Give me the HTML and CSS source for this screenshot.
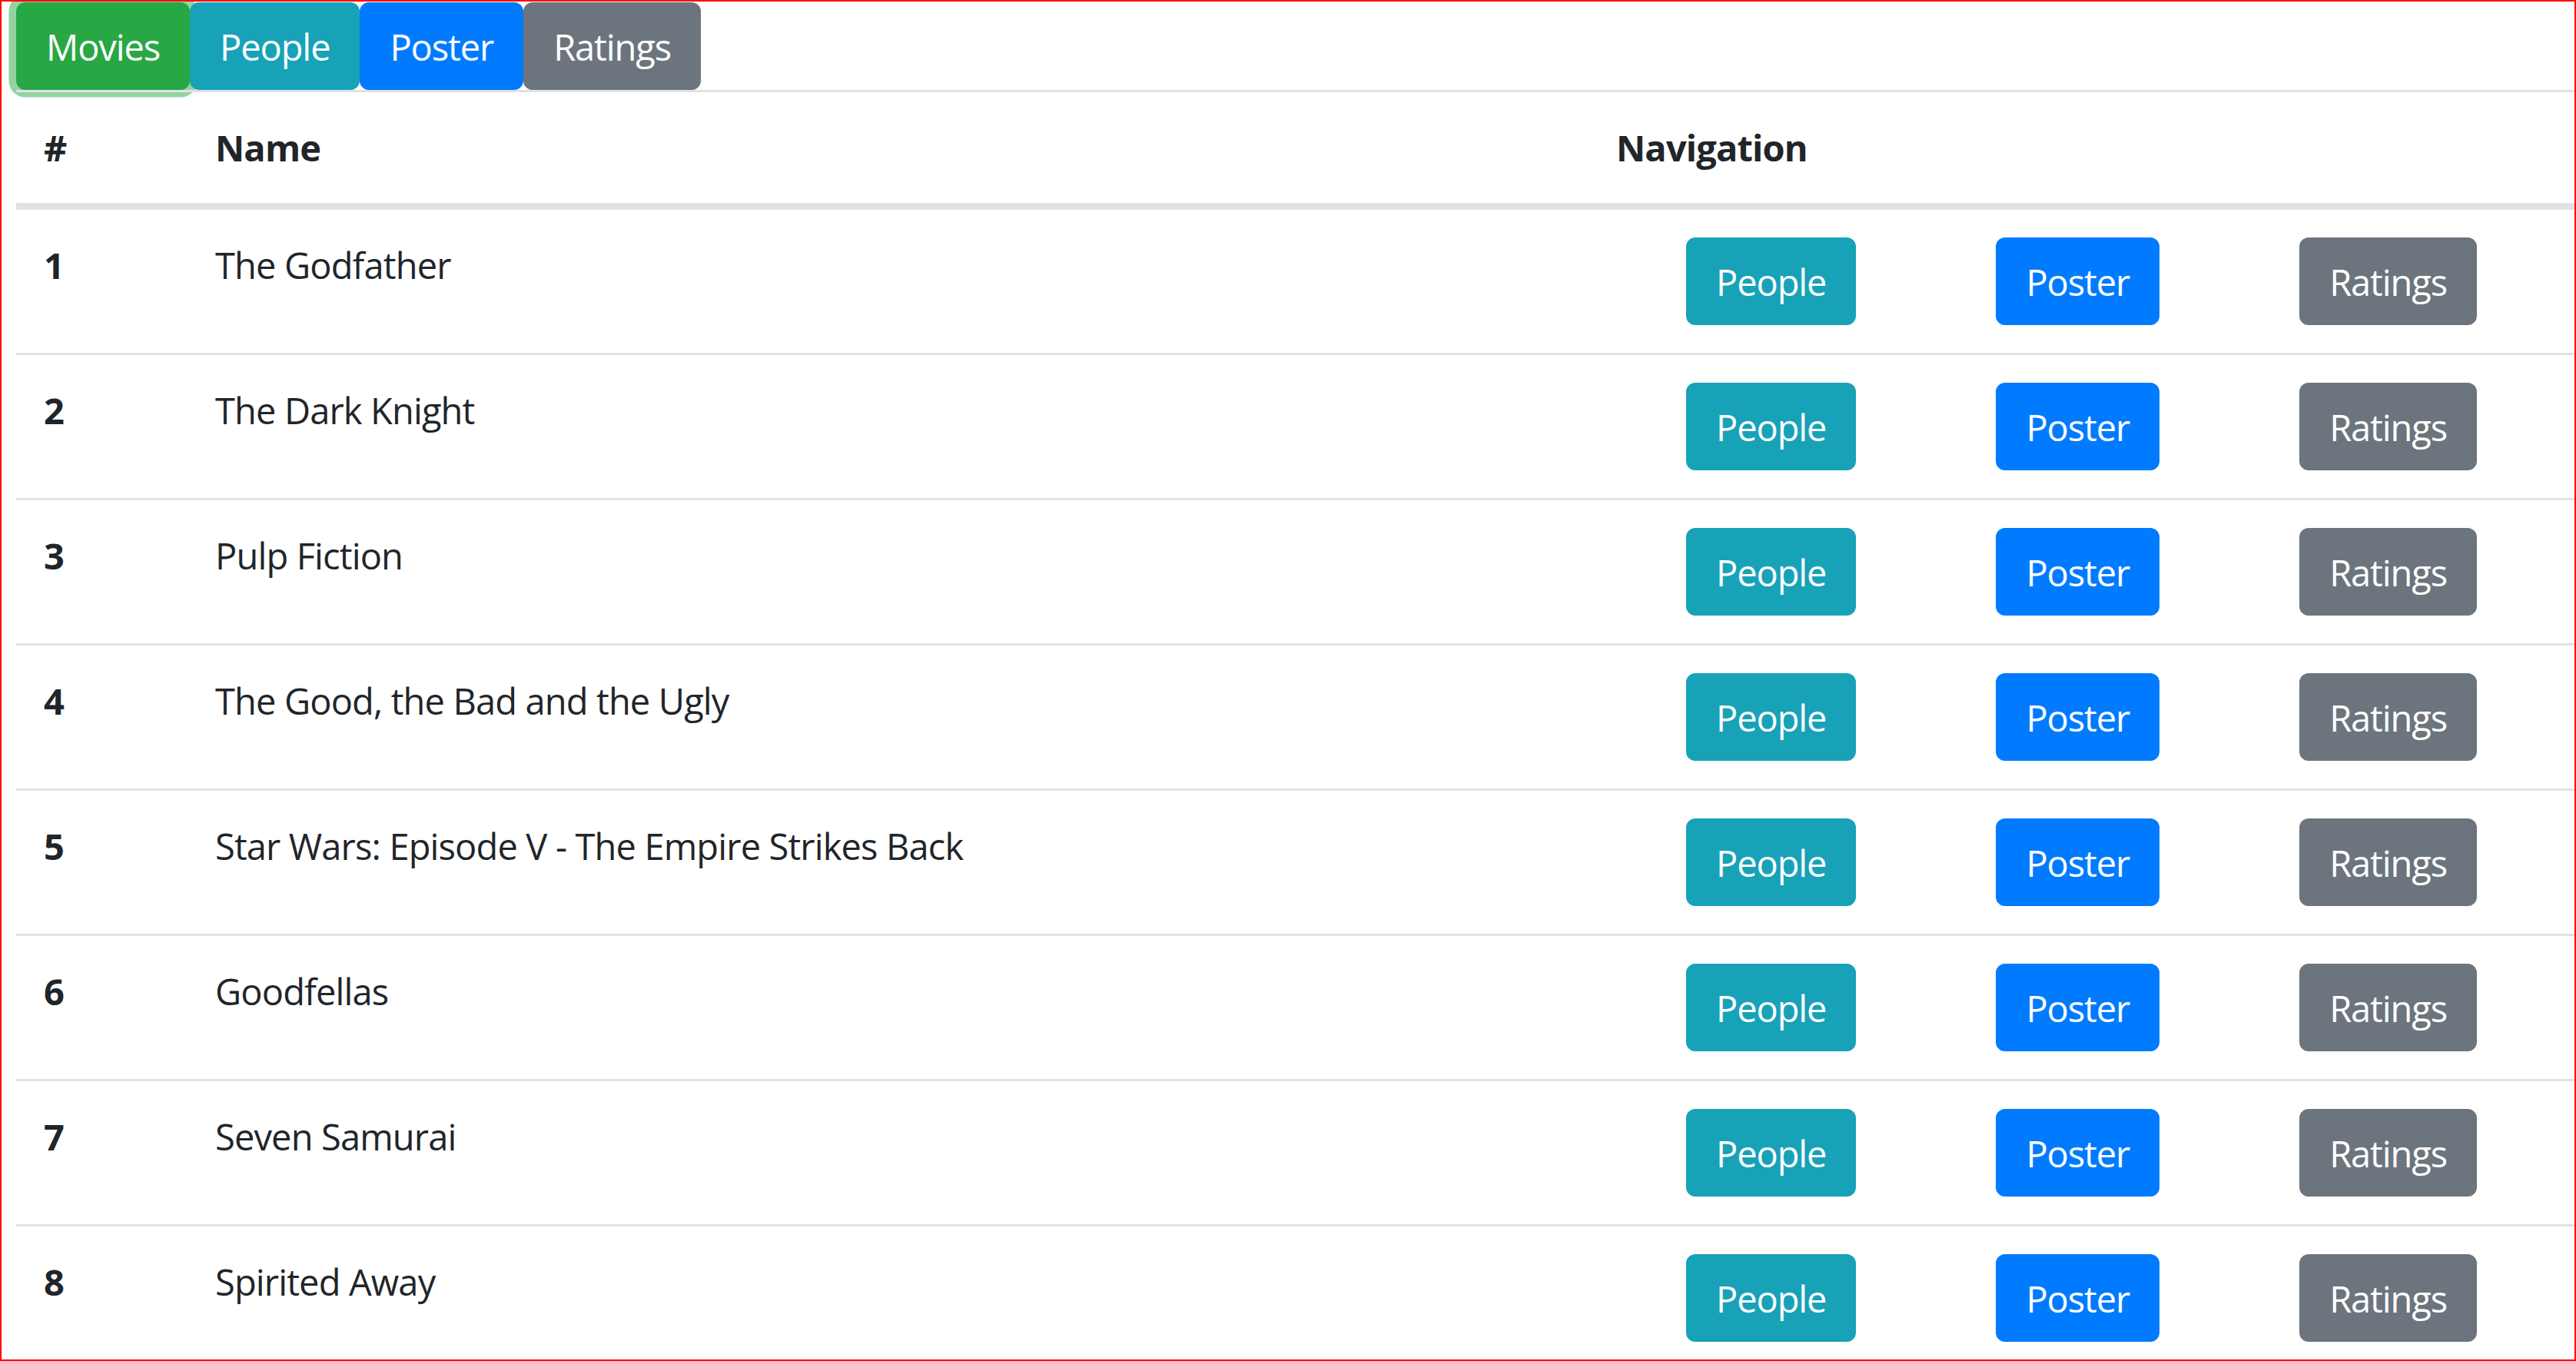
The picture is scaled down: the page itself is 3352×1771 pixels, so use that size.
FILE: index.html
```html
<!DOCTYPE html>
<html lang="en">
<head>
<meta charset="utf-8">
<title>Movies</title>
<link rel="stylesheet" href="styles.css">
</head>
<body>
<div class="frame">
  <nav class="tabs">
    <button class="btn btn-success is-focused">Movies</button><button class="btn btn-info">People</button><button class="btn btn-primary">Poster</button><button class="btn btn-secondary">Ratings</button>
  </nav>
  <div class="table">
    <div class="trow thead">
      <div class="cell num">#</div>
      <div class="cell name">Name</div>
      <div class="cell navhead">Navigation</div>
    </div>
    <div class="trow">
      <div class="cell num">1</div>
      <div class="cell name">The Godfather</div>
      <div class="cell nav"><button class="btn btn-info">People</button><button class="btn btn-primary">Poster</button><button class="btn btn-secondary">Ratings</button></div>
    </div>
    <div class="trow">
      <div class="cell num">2</div>
      <div class="cell name">The Dark Knight</div>
      <div class="cell nav"><button class="btn btn-info">People</button><button class="btn btn-primary">Poster</button><button class="btn btn-secondary">Ratings</button></div>
    </div>
    <div class="trow">
      <div class="cell num">3</div>
      <div class="cell name">Pulp Fiction</div>
      <div class="cell nav"><button class="btn btn-info">People</button><button class="btn btn-primary">Poster</button><button class="btn btn-secondary">Ratings</button></div>
    </div>
    <div class="trow">
      <div class="cell num">4</div>
      <div class="cell name">The Good, the Bad and the Ugly</div>
      <div class="cell nav"><button class="btn btn-info">People</button><button class="btn btn-primary">Poster</button><button class="btn btn-secondary">Ratings</button></div>
    </div>
    <div class="trow">
      <div class="cell num">5</div>
      <div class="cell name">Star Wars: Episode V - The Empire Strikes Back</div>
      <div class="cell nav"><button class="btn btn-info">People</button><button class="btn btn-primary">Poster</button><button class="btn btn-secondary">Ratings</button></div>
    </div>
    <div class="trow">
      <div class="cell num">6</div>
      <div class="cell name">Goodfellas</div>
      <div class="cell nav"><button class="btn btn-info">People</button><button class="btn btn-primary">Poster</button><button class="btn btn-secondary">Ratings</button></div>
    </div>
    <div class="trow">
      <div class="cell num">7</div>
      <div class="cell name">Seven Samurai</div>
      <div class="cell nav"><button class="btn btn-info">People</button><button class="btn btn-primary">Poster</button><button class="btn btn-secondary">Ratings</button></div>
    </div>
    <div class="trow">
      <div class="cell num">8</div>
      <div class="cell name">Spirited Away</div>
      <div class="cell nav"><button class="btn btn-info">People</button><button class="btn btn-primary">Poster</button><button class="btn btn-secondary">Ratings</button></div>
    </div>
  </div>
</div>
</body>
</html>
```
FILE: styles.css
```css
html, body {
  margin: 0;
  padding: 0;
  background: #ffffff;
}

body {
  font-family: "Open Sans", "Noto Sans", "Liberation Sans", sans-serif;
  font-size: 47px;
  line-height: 72px;
  letter-spacing: -0.85px;
  color: #212529;
}

.frame {
  box-sizing: border-box;
  height: 100vh;
  border: 2px solid #ff0000;
  padding: 1px 0 0 19px;
  overflow: hidden;
}

.tabs {
  display: flex;
}

.btn {
  display: inline-block;
  font-family: inherit;
  font-size: 47px;
  line-height: 72px;
  letter-spacing: -1.1px;
  font-weight: 400;
  color: #ffffff;
  padding: 19px 36px 17px;
  border: 3px solid transparent;
  border-radius: 12px;
  margin: 0;
  cursor: pointer;
  white-space: nowrap;
}

.btn-success { background: #28a745; border-color: #28a745; }
.btn-info { background: #17a2b8; border-color: #17a2b8; }
.btn-primary { background: #007bff; border-color: #007bff; }
.btn-secondary { background: #6c757d; border-color: #6c757d; }

.is-focused {
  box-shadow: 0 0 0 9.6px rgba(40, 167, 69, 0.5);
}

.table {
  width: 100%;
}

.trow {
  display: grid;
  grid-template-columns: 223px 1fr 1283px;
}

.cell {
  padding: 36px;
  border-top: 3px solid #dee2e6;
}

.thead .cell {
  font-weight: 700;
  border-bottom: 6px solid #dee2e6;
}

.num {
  font-weight: 700;
}

.nav {
  display: flex;
  justify-content: space-around;
  align-items: flex-start;
}
```
